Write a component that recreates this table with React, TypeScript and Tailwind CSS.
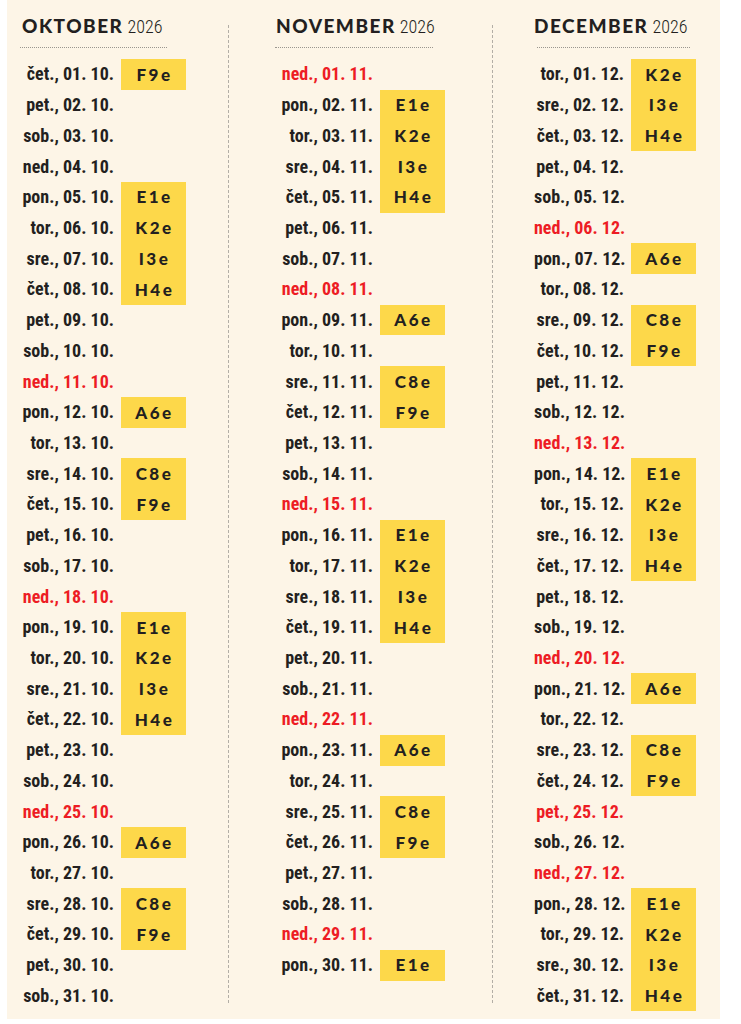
import React from "react";

const DAYS = ["pon.", "tor.", "sre.", "čet.", "pet.", "sob.", "ned."];

type Month = {
  name: string;
  mm: string;
  days: number;
  start: number;
  codes: Record<number, string>;
  red: number[];
  colW: string;
  pl: string;
  dateW: string;
  lineCls: string;
};

const months: Month[] = [
  {
    name: "OKTOBER",
    mm: "10",
    days: 31,
    start: 3,
    codes: { 1: "F9e", 5: "E1e", 6: "K2e", 7: "I3e", 8: "H4e", 12: "A6e", 14: "C8e", 15: "F9e", 19: "E1e", 20: "K2e", 21: "I3e", 22: "H4e", 26: "A6e", 28: "C8e", 29: "F9e" },
    red: [11, 18, 25],
    colW: "w-[221px]",
    pl: "pl-[15px]",
    dateW: "w-[92px]",
    lineCls: "ml-[-2px] w-[147px]",
  },
  {
    name: "NOVEMBER",
    mm: "11",
    days: 30,
    start: 6,
    codes: { 2: "E1e", 3: "K2e", 4: "I3e", 5: "H4e", 9: "A6e", 11: "C8e", 12: "F9e", 16: "E1e", 17: "K2e", 18: "I3e", 19: "H4e", 23: "A6e", 25: "C8e", 26: "F9e", 30: "E1e" },
    red: [1, 8, 15, 22, 29],
    colW: "w-[263px]",
    pl: "pl-[47px]",
    dateW: "w-[97px]",
    lineCls: "ml-[-1px] w-[158px]",
  },
  {
    name: "DECEMBER",
    mm: "12",
    days: 31,
    start: 1,
    codes: { 1: "K2e", 2: "I3e", 3: "H4e", 7: "A6e", 9: "C8e", 10: "F9e", 14: "E1e", 15: "K2e", 16: "I3e", 17: "H4e", 21: "A6e", 23: "C8e", 24: "F9e", 28: "E1e", 29: "K2e", 30: "I3e", 31: "H4e" },
    red: [6, 13, 20, 25, 27],
    colW: "w-[227px]",
    pl: "pl-[41px]",
    dateW: "w-[90px]",
    lineCls: "ml-[3px] w-[153px]",
  },
];

const pad = (n: number) => (n < 10 ? "0" + n : "" + n);

function Column({ m }: { m: Month }) {
  const rows = [];
  for (let d = 1; d <= m.days; d++) {
    const dow = (m.start + d - 1) % 7;
    const red = m.red.includes(d);
    const code = m.codes[d];
    rows.push(
      <div key={d} className="flex h-[30.73px] items-center">
        <div
          className={`${m.dateW} shrink-0 whitespace-nowrap text-right font-['Roboto_Condensed','Liberation_Sans_Narrow','DejaVu_Sans_Condensed',sans-serif] text-[18px] font-bold leading-none ${
            red ? "text-[#ed1c24]" : "text-[#231f20]"
          }`}
        >
          {DAYS[dow]}, {pad(d)}. {m.mm}.
        </div>
        <div
          className={`ml-[7px] flex h-full w-[65px] shrink-0 items-center justify-center whitespace-nowrap pl-[2px] font-['Lato',sans-serif] text-[17px] font-black tracking-[2.5px] text-[#231f20] ${
            code ? "bg-[#fdd84a]" : ""
          }`}
        >
          {code ?? ""}
        </div>
      </div>
    );
  }
  return (
    <div className={`${m.colW} ${m.pl} flex shrink-0 flex-col`}>
      <div className="pt-[14px]">
        <div className="flex items-baseline gap-[4px] whitespace-nowrap leading-[24px] text-[#231f20]">
          <span className="font-['Lato',sans-serif] text-[19px] font-black tracking-[1.5px]">{m.name}</span>
          <span className="font-['Roboto_Condensed','Liberation_Sans_Narrow','DejaVu_Sans_Condensed',sans-serif] text-[18px] font-light">2026</span>
        </div>
        <div className={`${m.lineCls} mt-[8px] border-b border-dotted border-[#9a968f]`} />
      </div>
      <div className="mt-[11px] flex flex-col">{rows}</div>
    </div>
  );
}

function Sep() {
  return <div className="mt-[25px] h-[978px] w-0 shrink-0 border-l border-dashed border-[#b3aea6]" />;
}

export default function App() {
  return (
    <div className="h-[1024px] w-[741px] bg-white">
      <div className="ml-[7px] flex h-[1019px] w-[713px] bg-[#fdf5e7]">
        <Column m={months[0]} />
        <Sep />
        <Column m={months[1]} />
        <Sep />
        <Column m={months[2]} />
      </div>
    </div>
  );
}
